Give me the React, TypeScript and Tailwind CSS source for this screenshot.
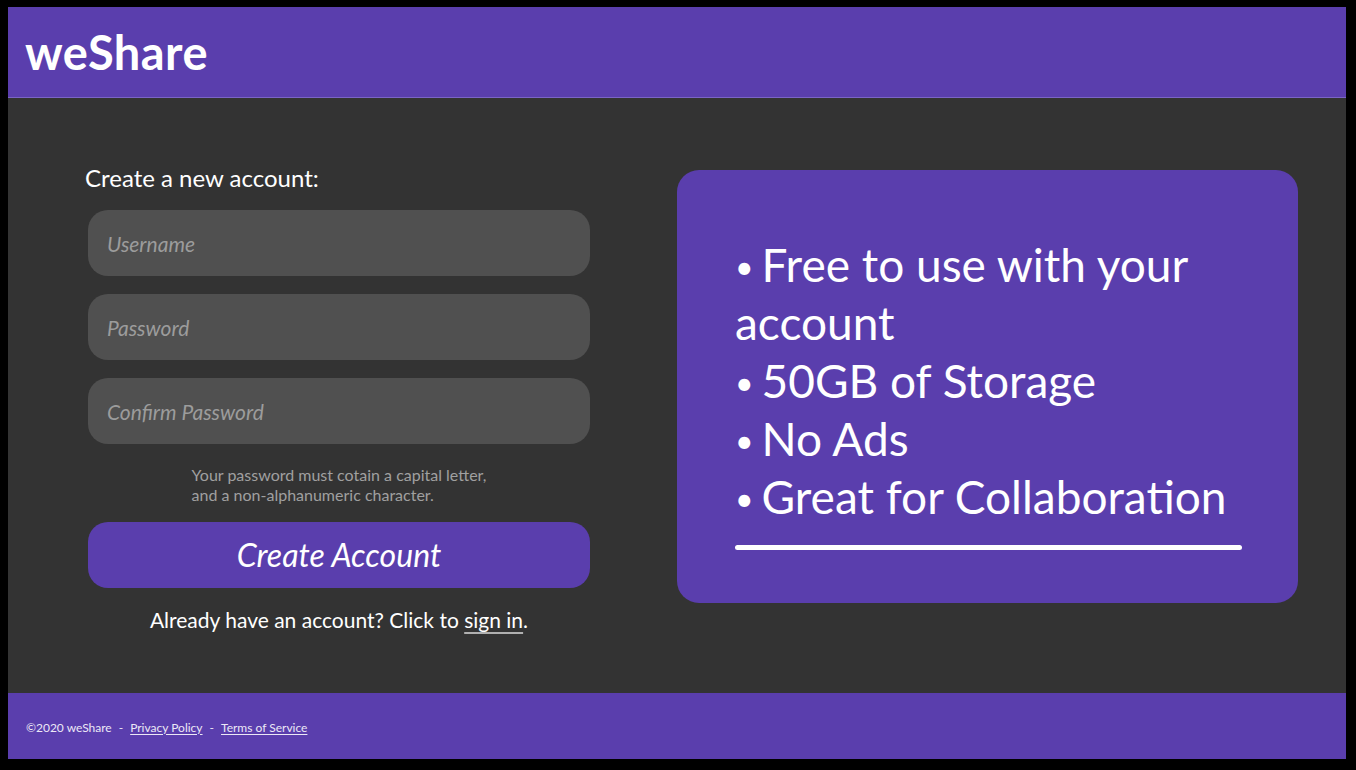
const font = { fontFamily: '"Lato", "Open Sans", sans-serif' };

const features = ['Free to use with your', '50GB of Storage', 'No Ads', 'Great for Collaboration'];

export default function App() {
    return (
        <div className="bg-black h-[770px] w-[1356px] pt-[7px] pl-[8px] pr-[10px] pb-[11px]" style={font}>
            <div className="flex flex-col h-full bg-[#333333]">

                {/* --- HEADER --- */}
                <header className="h-[91px] shrink-0 bg-[#5a3ead] border-b border-[#7b64c6] flex items-center pl-[17px]">
                    <h1 className="text-[47px] font-bold text-white leading-none tracking-[0.01em]">weShare</h1>
                </header>

                {/* --- MAIN --- */}
                <main className="flex-1 flex pl-[77px] pt-[64px]">
                    <section className="w-[505px] flex flex-col">
                        <h2 className="text-[24px] leading-[32px] text-white">Create a new account:</h2>

                        <div className="flex flex-col gap-[18px] mt-[16px] ml-[3px] w-[502px]">
                            {['Username', 'Password', 'Confirm Password'].map((p) => (
                                <input
                                    key={p}
                                    type={p === 'Username' ? 'text' : 'password'}
                                    placeholder={p}
                                    className="h-[66px] rounded-[20px] bg-[#505050] px-[19px] text-[21px] italic text-white placeholder:text-[#9c9c9c] outline-none"
                                    style={font}
                                />
                            ))}
                        </div>

                        <div className="ml-[3px] w-[502px] flex justify-center mt-[21px]">
                            <p className="text-[16px] leading-[20px] text-[#a0a0a0] text-left">
                                Your password must cotain a capital letter,<br />
                                and a non-alphanumeric character.
                            </p>
                        </div>

                        <button
                            className="ml-[3px] w-[502px] h-[66px] mt-[17px] rounded-[20px] bg-[#5a3ead] text-white italic text-[32px]"
                            style={font}
                        >
                            Create Account
                        </button>

                        <p className="ml-[3px] w-[502px] mt-[18px] text-center text-white text-[21px] leading-[28px]">
                            Already have an account? Click to{' '}
                            <a href="#" className="underline decoration-[#b0b0b0] underline-offset-4">sign in</a>.
                        </p>
                    </section>

                    <section className="ml-[87px] mt-[8px] w-[621px] h-[433px] rounded-[22px] bg-[#5a3ead] pl-[58px] pt-[66px]">
                        <ul className="text-white text-[46px] leading-[58px] whitespace-nowrap">
                            {features.map((f, i) => (
                                <li key={f}>
                                    <span className="text-[32px] leading-none align-[3px] mr-[8px]">•</span>
                                    {f}
                                    {i === 0 && (<><br />account</>)}
                                </li>
                            ))}
                        </ul>
                        <div className="mt-[19px] w-[507px] h-[5px] rounded-full bg-white"></div>
                    </section>
                </main>

                {/* --- FOOTER --- */}
                <footer className="h-[66px] shrink-0 bg-[#5a3ead] flex items-center pl-[18px] pt-[3px] text-[12px] text-[#ece8f6]">
                    <span>©2020 weShare</span>
                    <span className="mx-[7px]">-</span>
                    <a href="#" className="underline underline-offset-2">Privacy Policy</a>
                    <span className="mx-[7px]">-</span>
                    <a href="#" className="underline underline-offset-2">Terms of Service</a>
                </footer>
            </div>
        </div>
    )
}
